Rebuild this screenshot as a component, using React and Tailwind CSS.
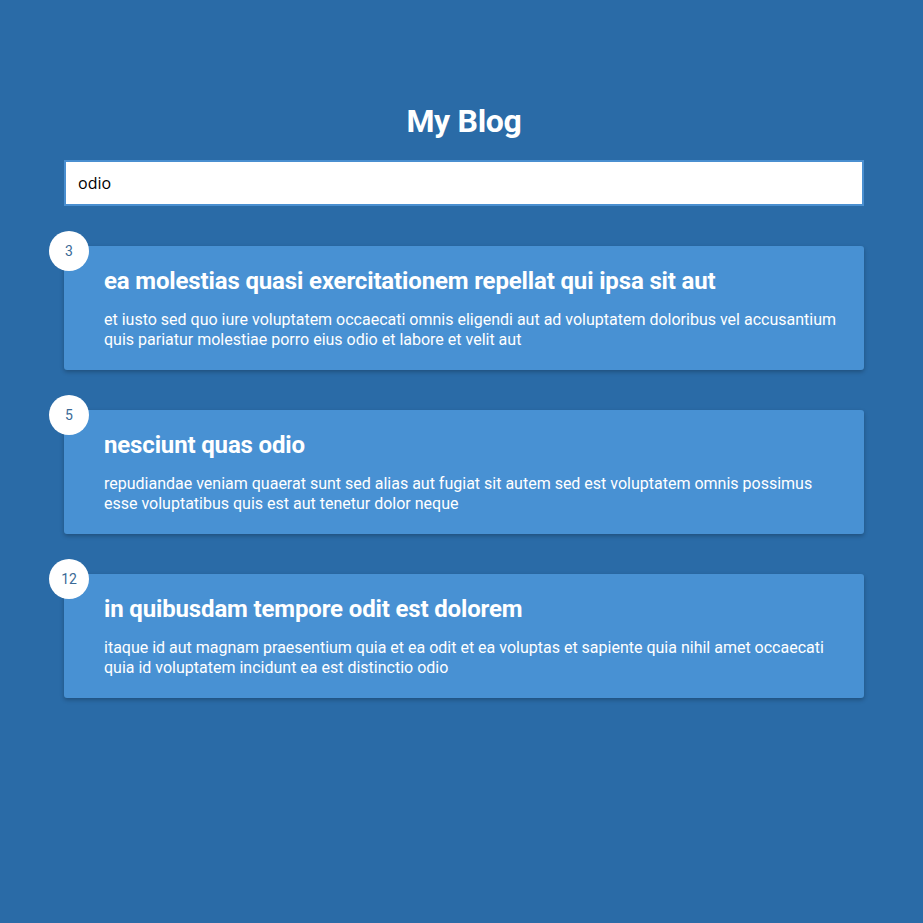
export default function App() {
  const posts = [
    {
      id: 3,
      title: "ea molestias quasi exercitationem repellat qui ipsa sit aut",
      body: "et iusto sed quo iure voluptatem occaecati omnis eligendi aut ad voluptatem doloribus vel accusantium quis pariatur molestiae porro eius odio et labore et velit aut",
    },
    {
      id: 5,
      title: "nesciunt quas odio",
      body: "repudiandae veniam quaerat sunt sed alias aut fugiat sit autem sed est voluptatem omnis possimus esse voluptatibus quis est aut tenetur dolor neque",
    },
    {
      id: 12,
      title: "in quibusdam tempore odit est dolorem",
      body: "itaque id aut magnam praesentium quia et ea odit et ea voluptas et sapiente quia nihil amet occaecati quia id voluptatem incidunt ea est distinctio odio",
    },
  ];
  return (
    <div className="min-h-[923px] bg-[#2a6ba7] text-white font-['Roboto',sans-serif] pt-[100px]">
      <div className="w-[800px] ml-16">
        <h1 className="text-center text-[32px] leading-[42px] font-bold tracking-[-0.3px]">My Blog</h1>
        <div className="mt-[18px]">
          <input
            defaultValue="odio"
            className="w-full h-[46px] bg-white border-2 border-[#4a8fd0] px-3 text-black text-[16px] font-['Open_Sans',sans-serif] outline-none"
          />
        </div>
        <div className="mt-10 flex flex-col gap-10">
          {posts.map((p) => (
            <div key={p.id} className="relative bg-[#4891d3] rounded-[3px] shadow-[0_2px_4px_rgba(0,0,0,0.25)] pl-10 pr-6 pt-[20px] h-[124px]">
              <div className="absolute -left-[15px] -top-[15px] w-10 h-10 rounded-full bg-white flex items-center justify-center text-[14px] text-[#3a6a96]">
                {p.id}
              </div>
              <h2 className="text-[24px] leading-[30px] font-bold tracking-[-0.15px]">{p.title}</h2>
              <p className="mt-[14px] text-[16px] leading-5">{p.body}</p>
            </div>
          ))}
        </div>
      </div>
    </div>
  );
}
